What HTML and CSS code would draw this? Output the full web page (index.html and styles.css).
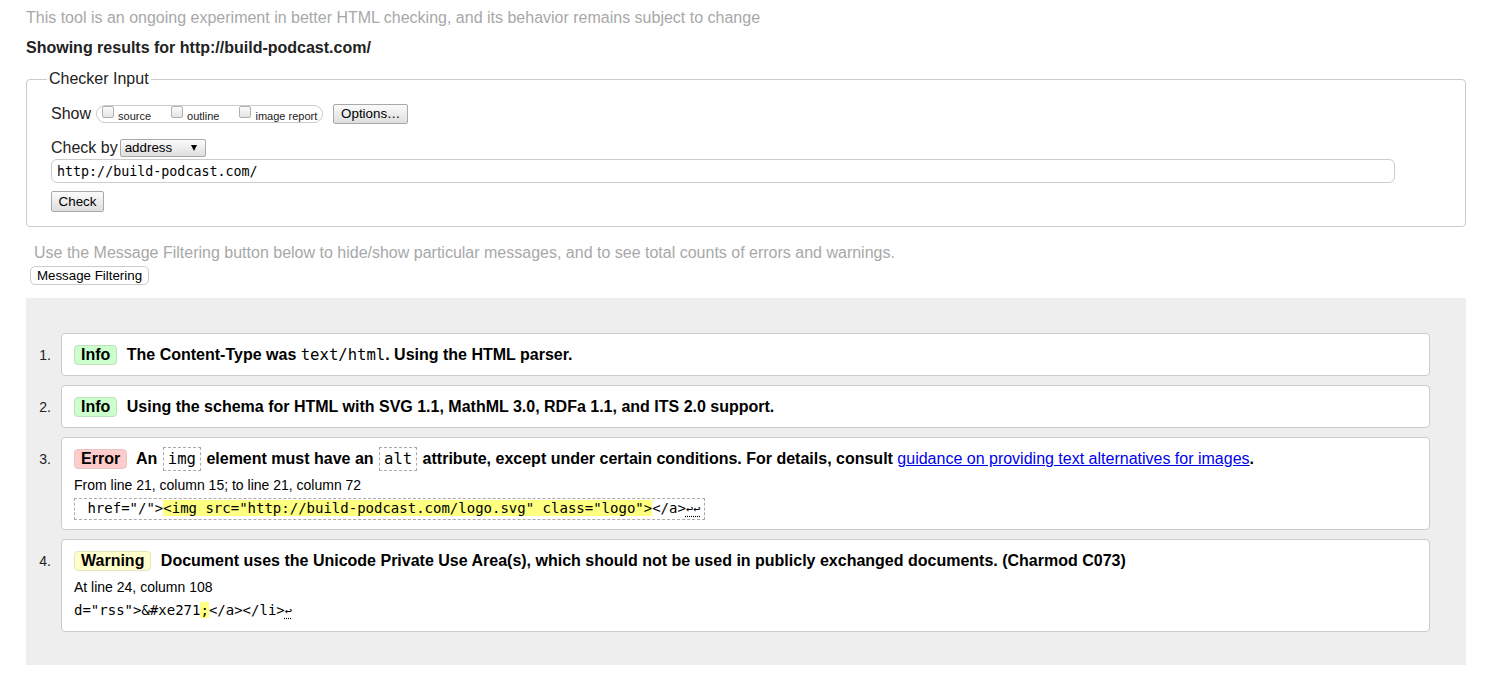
FILE: index.html
```html
<!DOCTYPE html>
<html lang="en">
<head>
<meta charset="utf-8">
<title>Nu Html Checker</title>
<link rel="stylesheet" href="styles.css">
</head>
<body>
<p class="note">This tool is an ongoing experiment in better HTML checking, and its behavior remains subject to change</p>
<p class="showing">Showing results for http://build-podcast.com/</p>
<fieldset class="checker">
  <legend>Checker Input</legend>
  <div class="row show-row">
    <span class="label">Show</span>
    <span class="group">
      <label class="opt"><input type="checkbox" class="cb"><span>source</span></label>
      <label class="opt"><input type="checkbox" class="cb"><span>outline</span></label>
      <label class="opt"><input type="checkbox" class="cb"><span>image report</span></label>
    </span>
    <button class="btn options">Options…</button>
  </div>
  <div class="row by-row">
    <span class="label">Check by</span>
    <span class="select-wrap"><select class="select"><option>address</option></select></span>
  </div>
  <input class="url" type="text" value="http://build-podcast.com/">
  <div><button class="btn check">Check</button></div>
</fieldset>
<p class="filter-note">Use the Message Filtering button below to hide/show particular messages, and to see total counts of errors and warnings.</p>
<button class="filter">Message Filtering</button>
<div class="results">
  <ol class="messages">
    <li class="item">
      <span class="num">1.</span>
      <div class="msg">
        <p class="title"><span class="badge info">Info</span> <span>The Content-Type was <code>text/html</code>. Using the HTML parser.</span></p>
      </div>
    </li>
    <li class="item">
      <span class="num">2.</span>
      <div class="msg">
        <p class="title"><span class="badge info">Info</span> <span>Using the schema for HTML with SVG 1.1, MathML 3.0, RDFa 1.1, and ITS 2.0 support.</span></p>
      </div>
    </li>
    <li class="item">
      <span class="num">3.</span>
      <div class="msg">
        <p class="title"><span class="badge error">Error</span> <span>An <code class="boxed">img</code> element must have an <code class="boxed">alt</code> attribute, except under certain conditions. For details, consult <a href="#">guidance on providing text alternatives for images</a>.</span></p>
        <p class="loc">From line 21, column 15; to line 21, column 72</p>
        <div class="extract-row"><code class="extract"> href="/"&gt;<mark>&lt;img src="http://build-podcast.com/logo.svg" class="logo"&gt;</mark>&lt;/a&gt;<abbr title="LF">↩</abbr><abbr title="LF">↩</abbr></code></div>
      </div>
    </li>
    <li class="item">
      <span class="num">4.</span>
      <div class="msg">
        <p class="title"><span class="badge warning">Warning</span> <span>Document uses the Unicode Private Use Area(s), which should not be used in publicly exchanged documents. (Charmod C073)</span></p>
        <p class="loc">At line 24, column 108</p>
        <div class="extract-row"><code class="extract plain">d="rss"&gt;&amp;#xe271<mark>;</mark>&lt;/a&gt;&lt;/li&gt;<abbr title="LF">↩</abbr></code></div>
      </div>
    </li>
  </ol>
</div>
</body>
</html>
```
FILE: styles.css
```css
* { box-sizing: border-box; }

body {
  margin: 0;
  padding: 0 33px 20px 26px;
  font-family: "Liberation Sans", Arial, sans-serif;
  font-size: 16px;
  color: #000;
  background: #fff;
}

.note {
  margin: 8px 0 0;
  line-height: 20px;
  color: #a8a8a8;
}

.showing {
  margin: 10px 0 0;
  line-height: 20px;
  font-weight: bold;
  color: #222;
}

.checker {
  margin: 11px 0 0;
  width: 1440px;
  min-width: 0;
  border: 1px solid #ccc;
  border-radius: 4px;
  padding: 0 24px 14px;
}

.checker legend {
  padding: 0 2px;
  margin-left: -4px;
  line-height: 20px;
  color: #222;
}

.row {
  display: flex;
  align-items: center;
  height: 20px;
}

.show-row { margin-top: 15px; }
.by-row { margin-top: 14px; }

.label {
  line-height: 20px;
  color: #222;
}

.group {
  display: flex;
  align-items: center;
  gap: 20px;
  margin-left: 5px;
  height: 18px;
  border: 1px solid #ccc;
  border-radius: 9px;
  padding: 0 5px;
  font-size: 11px;
  color: #222;
}

.opt {
  display: flex;
  align-items: center;
  gap: 4px;
}

.opt span { position: relative; top: 2px; }

.cb {
  appearance: none;
  -webkit-appearance: none;
  margin: 0;
  width: 12px;
  height: 12px;
  border: 1px solid #b0b0b0;
  border-radius: 2px;
  background: linear-gradient(#fcfcfc, #e4e4e4);
  position: relative;
  top: -2px;
}

.btn {
  font-family: "Liberation Sans", Arial, sans-serif;
  font-size: 13.33px;
  height: 20px;
  padding: 0 8px;
  border: 1px solid #a9a9a9;
  border-radius: 2px;
  background: linear-gradient(#fbfbfb, #dedede);
  color: #000;
  line-height: 18px;
}

.options {
  margin-left: 10px;
  width: 75px;
  padding: 0;
}

.check {
  margin-top: 8px;
  height: 21px;
  width: 53px;
  padding: 0;
}

.select-wrap {
  position: relative;
  display: inline-block;
  margin-left: 2px;
}

.select-wrap::after {
  content: "";
  position: absolute;
  right: 9px;
  top: 6px;
  border-left: 3.5px solid transparent;
  border-right: 3.5px solid transparent;
  border-top: 6px solid #000;
  pointer-events: none;
}

.select {
  appearance: none;
  -webkit-appearance: none;
  display: block;
  width: 86px;
  height: 18px;
  margin: 0;
  padding: 0 0 0 4px;
  border: 1px solid #a9a9a9;
  border-radius: 2px;
  background: linear-gradient(#fbfbfb, #dedede);
  font-family: "Liberation Sans", Arial, sans-serif;
  font-size: 13.33px;
  color: #000;
  line-height: 16px;
}

.url {
  display: block;
  margin-top: 1px;
  width: 1344px;
  height: 24px;
  padding: 0 5px;
  border: 1px solid #ccc;
  border-radius: 6px;
  font-family: "DejaVu Sans Mono", monospace;
  font-size: 13.33px;
  color: #000;
  outline: none;
}

.filter-note {
  margin: 16px 0 0;
  padding-left: 8px;
  line-height: 20px;
  color: #a8a8a8;
}

.filter {
  display: block;
  margin: 3px 0 0 4px;
  height: 19px;
  width: 119px;
  padding: 0;
  border: 1px solid #ccc;
  border-radius: 5px;
  background: #fff;
  font-family: "Liberation Sans", Arial, sans-serif;
  font-size: 13.33px;
  color: #000;
  line-height: 17px;
}

.results {
  margin-top: 13px;
  width: 1440px;
  background: #eee;
  padding: 35px 36px 33px 0;
}

.messages {
  list-style: none;
  margin: 0;
  padding: 0;
  display: flex;
  flex-direction: column;
  gap: 9px;
}

.item {
  display: flex;
  align-items: baseline;
  font-size: 14px;
}

.num {
  flex: 0 0 35px;
  text-align: right;
  padding-right: 10px;
  font-size: 14px;
  color: #222;
}

.msg {
  flex: 1;
  background: #fff;
  border: 1px solid #ccc;
  border-radius: 4px;
  padding: 10px 12px;
}

.title {
  margin: 0;
  font-size: 16px;
  line-height: 21px;
  font-weight: bold;
}

.badge {
  display: inline-block;
  line-height: 18px;
  padding: 0 6px;
  border: 1px solid #c4dcc4;
  border-radius: 4px;
  margin-right: 5px;
}

.badge.info { background: #ccffcc; border-color: #bde0bd; }
.badge.error { background: #ffcccc; border-color: #e8c4c4; }
.badge.warning { background: #ffffcc; border-color: #e4e4bd; }

.title code {
  font-family: "DejaVu Sans Mono", monospace;
  font-size: 15.6px;
  line-height: 16px;
  font-weight: normal;
}

.title code.boxed {
  border: 1px dashed #aaa;
  padding: 2px 4px;
  margin: 0 1px;
}

.title a {
  color: #0000ee;
  font-weight: normal;
}

.loc {
  margin: 7px 0 0;
  font-size: 14px;
  line-height: 18px;
}

.extract-row {
  margin-top: 4px;
  line-height: 21px;
  height: 21px;
}

.extract {
  display: inline-block;
  vertical-align: top;
  font-family: "DejaVu Sans Mono", monospace;
  font-size: 14px;
  line-height: 19px;
  white-space: pre;
  border: 1px dashed #aaa;
  padding: 0 4px;
}

.extract.plain {
  border-color: transparent;
  padding: 0;
  margin-left: -1px;
}

.extract mark {
  background: #ffff80;
  color: inherit;
}

.extract abbr {
  text-decoration: underline dotted;
  text-underline-offset: 3px;
  font-size: 12px;
}
```
